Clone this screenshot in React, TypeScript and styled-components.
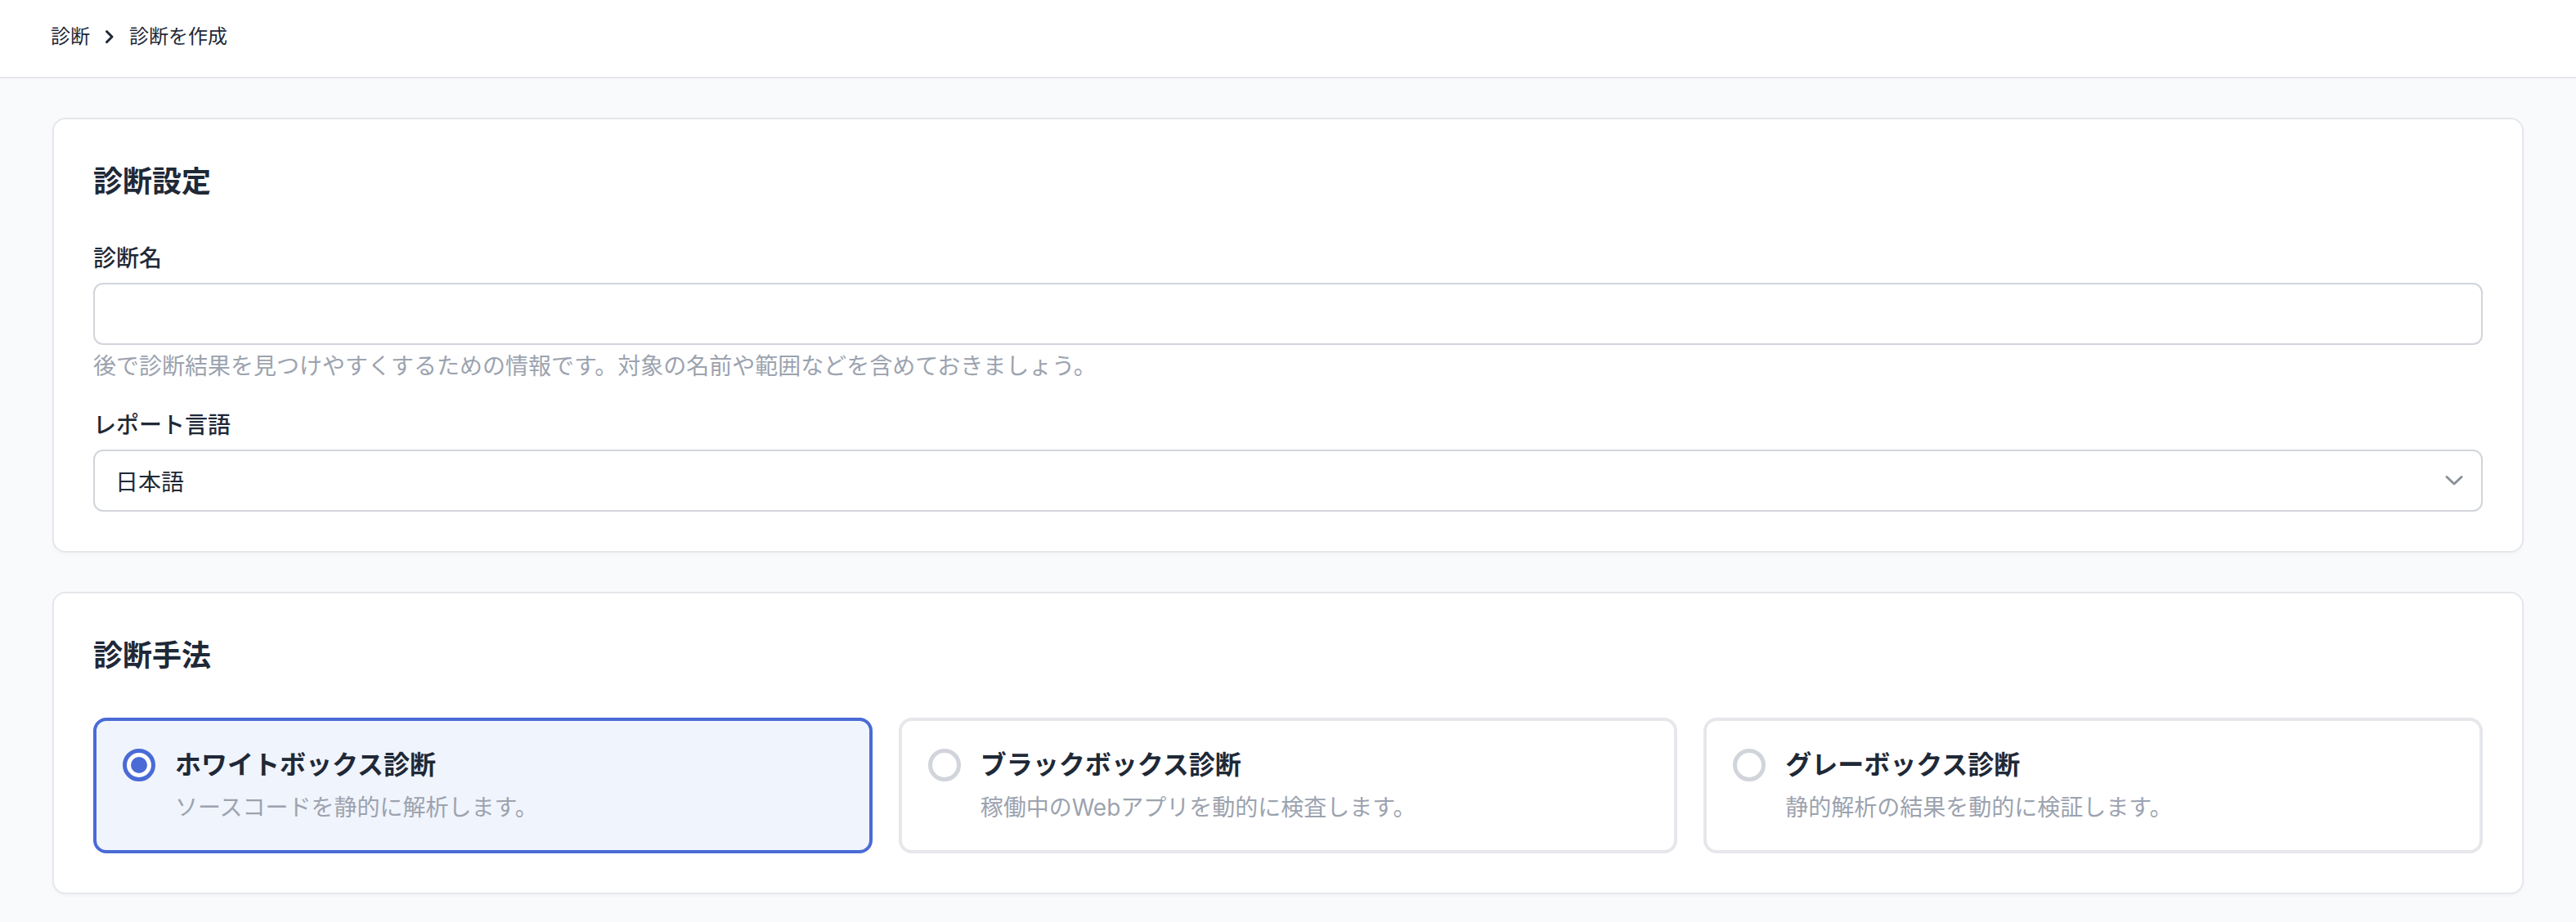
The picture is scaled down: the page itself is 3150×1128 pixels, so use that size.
import React, { useState } from 'react';
import styled, { createGlobalStyle } from 'styled-components';

const GlobalStyle = createGlobalStyle`
  * { box-sizing: border-box; }
  body {
    margin: 0;
    background: #f9fafb;
    font-family: 'Inter', 'Noto Sans CJK JP', sans-serif;
    color: #1f2937;
  }
`;

const Page = styled.div`
  min-height: 100vh;
  background: #f9fafb;
`;

const Header = styled.header`
  height: 96px;
  background: #fff;
  border-bottom: 2px solid #e5e7eb;
  display: flex;
  align-items: center;
  padding: 0 62px 4px;
`;

const Breadcrumb = styled.nav`
  display: flex;
  align-items: center;
  gap: 18px;
  font-size: 24px;
  line-height: 32px;
  color: #1f2937;
`;

const Main = styled.main`
  padding: 48px 64px;
  display: flex;
  flex-direction: column;
  gap: 48px;
`;

const Card = styled.section`
  background: #fff;
  border: 2px solid #e5e7eb;
  border-radius: 16px;
  padding: 48px;
  box-shadow: 0 2px 4px rgba(17, 24, 39, 0.03);
`;

const CardTitle = styled.h2`
  margin: 0 0 48px;
  font-size: 36px;
  line-height: 56px;
  font-weight: 700;
  color: #1f2937;
`;

const Field = styled.div<{ spaced?: boolean }>`
  margin-top: ${p => (p.spaced ? '36px' : '0')};
`;

const Label = styled.label`
  display: block;
  font-size: 28px;
  line-height: 36px;
  font-weight: 500;
  color: #1f2937;
  margin-bottom: 12px;
`;

const TextInput = styled.input`
  display: block;
  width: 100%;
  height: 76px;
  border: 2px solid #d1d5db;
  border-radius: 12px;
  padding: 0 24px;
  font-family: inherit;
  font-size: 28px;
  color: #1f2937;
  background: #fff;
  outline: none;
`;

const Help = styled.p`
  margin: 8px 0 0;
  font-size: 28px;
  line-height: 36px;
  color: #9ca3af;
`;

const SelectBox = styled.div`
  height: 76px;
  border: 2px solid #d1d5db;
  border-radius: 12px;
  padding: 0 22px 0 25px;
  display: flex;
  align-items: center;
  justify-content: space-between;
  font-size: 28px;
  color: #1f2937;
  background: #fff;
`;

const MethodGrid = styled.div`
  display: grid;
  grid-template-columns: repeat(3, 1fr);
  gap: 32px;
`;

const MethodCard = styled.div<{ selected: boolean }>`
  display: flex;
  align-items: flex-start;
  gap: 24px;
  padding: 32px;
  border: 4px solid ${p => (p.selected ? '#4a6bd6' : '#e5e7eb')};
  border-radius: 16px;
  background: ${p => (p.selected ? '#f0f4fc' : '#fff')};
  cursor: pointer;
`;

const Radio = styled.span<{ checked: boolean }>`
  flex: none;
  width: 40px;
  height: 40px;
  margin-top: 2px;
  border-radius: 50%;
  border: 5px solid ${p => (p.checked ? '#4a6bd6' : '#d1d5db')};
  background: #fff;
  display: flex;
  align-items: center;
  justify-content: center;

  &::after {
    content: '';
    width: 20px;
    height: 20px;
    border-radius: 50%;
    background: ${p => (p.checked ? '#4a6bd6' : 'transparent')};
  }
`;

const MethodTitle = styled.div`
  font-size: 32px;
  line-height: 44px;
  font-weight: 600;
  color: #1f2937;
  margin-bottom: 10px;
`;

const MethodDesc = styled.div`
  font-size: 28px;
  line-height: 40px;
  color: #9ca3af;
`;

const methods = [
  { id: 'white', title: 'ホワイトボックス診断', desc: 'ソースコードを静的に解析します。' },
  { id: 'black', title: 'ブラックボックス診断', desc: '稼働中のWebアプリを動的に検査します。' },
  { id: 'gray', title: 'グレーボックス診断', desc: '静的解析の結果を動的に検証します。' },
];

const App: React.FC = () => {
  const [method, setMethod] = useState('white');

  return (
    <Page>
      <GlobalStyle />
      <Header>
        <Breadcrumb>
          <span>診断</span>
          <svg width="12" height="18" viewBox="0 0 12 18" fill="none">
            <path d="M2.5 2.5L9 9l-6.5 6.5" stroke="#1f2937" strokeWidth="3" strokeLinecap="round" strokeLinejoin="round" />
          </svg>
          <span>診断を作成</span>
        </Breadcrumb>
      </Header>

      <Main>
        <Card>
          <CardTitle>診断設定</CardTitle>
          <Field>
            <Label>診断名</Label>
            <TextInput type="text" />
            <Help>後で診断結果を見つけやすくするための情報です。対象の名前や範囲などを含めておきましょう。</Help>
          </Field>
          <Field spaced>
            <Label>レポート言語</Label>
            <SelectBox>
              <span>日本語</span>
              <svg width="22" height="14" viewBox="0 0 22 14" fill="none">
                <path d="M2 2.5l9 8.5 9-8.5" stroke="#8b9099" strokeWidth="3" strokeLinecap="round" strokeLinejoin="round" />
              </svg>
            </SelectBox>
          </Field>
        </Card>

        <Card>
          <CardTitle>診断手法</CardTitle>
          <MethodGrid>
            {methods.map(m => (
              <MethodCard key={m.id} selected={method === m.id} onClick={() => setMethod(m.id)}>
                <Radio checked={method === m.id} />
                <div>
                  <MethodTitle>{m.title}</MethodTitle>
                  <MethodDesc>{m.desc}</MethodDesc>
                </div>
              </MethodCard>
            ))}
          </MethodGrid>
        </Card>
      </Main>
    </Page>
  );
};

export default App;
